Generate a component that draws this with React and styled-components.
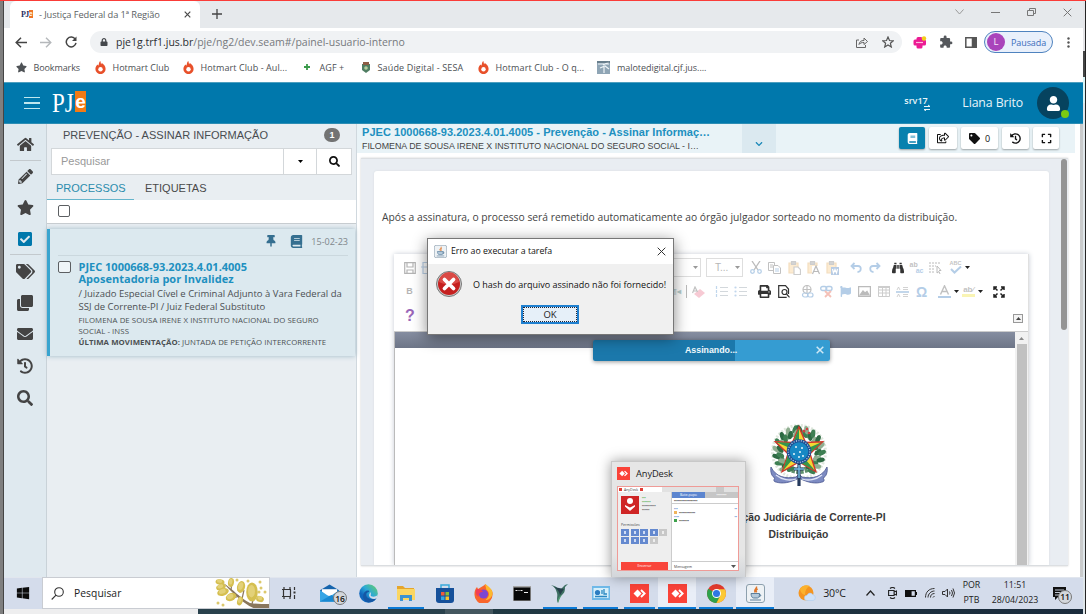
import React from "react";
import styled, { createGlobalStyle, css } from "styled-components";
import {
  FaHome, FaPencilAlt, FaStar, FaCheckSquare, FaTags, FaClone, FaEnvelope, FaHistory, FaSearch,
  FaThumbtack, FaBook, FaTag, FaExpand, FaLock, FaBinoculars, FaPrint,
  FaChevronDown, FaUser, FaFlag, FaWindows, FaRegShareSquare,
} from "react-icons/fa";
import { MdExtension } from "react-icons/md";

const arial = `"Liberation Sans", Arial, sans-serif`;
const open = `"Open Sans", "Noto Sans", sans-serif`;

const Global = createGlobalStyle`
  * { box-sizing: border-box; }
  html, body { margin: 0; overflow: hidden; background: #fff; }
  body { font-family: ${open}; color: #444; line-height: 1; }
  svg { display: block; flex: none; }
`;

const Screen = styled.div`
  position: relative; width: 1086px; height: 614px; overflow: hidden;
  display: grid; grid-template-columns: 4px 1079px 3px; border-top: 1px solid #fa3c38;
`;
const LeftEdge = styled.div`background: #7f7f7f; border-right: 1px solid #454545;`;
const RightEdge = styled.div`
  background: linear-gradient(#e5e5e8 0 50px, #444 50px 76px, #d7f4f6 76px 102px, #dfe6ea 102px);
  border-right: 1px solid #252525;
`;
const Desktop = styled.div`display: flex; flex-direction: column; height: 613px; min-width: 0;`;
const Txt = styled.span`
  white-space: nowrap; flex: none;
  font-size: ${(p) => p.$s}px; letter-spacing: ${(p) => p.$ls || 0}px;
  margin-left: ${(p) => p.$ml || 0}px;
  ${(p) => p.$c && css`color: ${p.$c};`}
`;

/* ---- browser chrome ---- */
const TabStrip = styled.div`height: 27px; background: #e6e9ec; display: flex; padding-left: 6px;`;
const Tab = styled.div`
  width: 190px; background: #fff; border-radius: 6px 6px 0 0; display: flex; align-items: center;
  padding-left: 11px; color: #5b5f64;
`;
const Favicon = styled.div`
  display: flex; align-items: center; width: 12px; height: 9px; font: bold 8px/9px "Liberation Serif", serif;
  letter-spacing: -0.6px; color: #27305f;
  b { color: #fff; background: #ee7526; width: 4px; font: bold 7px/8px ${arial}; }
`;
const CloseSlot = styled.div`margin-left: auto; margin-right: ${(p) => p.$mr || 0}px;`;
const NewTab = styled.div`display: flex; align-items: center; margin-left: 12px;`;
const WindowControls = styled.div`
  display: flex; align-items: center; margin-left: auto; gap: 27px; padding: 0 11px 4px 0;
`;
const AddressRow = styled.div`
  height: 28px; background: #fff; display: flex; align-items: center; padding: 1px 13px 0 11px;
`;
const NavButtons = styled.div`display: flex; gap: 13px; width: 75px; align-items: center;`;
const Omnibox = styled.div`
  width: 812px; height: 22px; border-radius: 11px; background: #f0f2f4; display: flex; align-items: center;
  padding: 0 8px 0 10px; color: #76797d;
  b { font-weight: 400; color: #2b2e31; }
`;
const OmniActions = styled.div`display: flex; gap: 14px; margin-left: auto; align-items: center;`;
const Extensions = styled.div`display: flex; gap: 12px; align-items: center; margin-left: 11px;`;
const Profile = styled.div`
  width: 69px; height: 22px; margin-left: 7px; border: 1px solid #4f83bf; border-radius: 11px; background: #e9f0fb;
  display: flex; align-items: center; color: #3a6dbb; padding-left: 2px;
`;
const Initial = styled.div`
  width: 18px; height: 18px; border-radius: 50%; background: #a944bb; color: #f6e7f9; font-size: 9.5px;
  display: grid; place-items: center;
`;
const Bookmarks = styled.div`
  height: 27px; background: #fff; display: flex; align-items: center; padding: 0 0 3px 11.500px; color: #4c4f53;
`;
const Bookmark = styled.div`
  display: flex; align-items: center; gap: ${(p) => p.$g || 7}px; width: ${(p) => p.$w}px; flex: none;
`;

/* ---- application header ---- */
const Header = styled.header`
  height: 42px; background: #0078ac; border-top: 1px solid #4d9fbf; border-bottom: 1px solid #2c8db4;
  display: flex; align-items: center; padding: 0 14px 0 20px; color: #e8f5fa;
`;
const Burger = styled.div`
  width: 16px; height: 12px; border: solid #bfe8ef; border-width: 1.5px 0; display: flex; align-items: center;
  &::after { content: ""; width: 100%; height: 1.5px; background: #bfe8ef; }
`;
const Logo = styled.div`
  display: flex; align-items: center; margin-left: 12px; height: 30px; color: #fff;
  font: 28px/30px "Liberation Serif", serif;
  span { display: inline-block; transform: scaleX(0.82); transform-origin: left; width: 23px; }
  b { width: 11px; height: 21px; background: #f27a14; font: bold 19px/22px ${arial}; text-align: center; margin-bottom: 4px; }
`;
const Server = styled.div`display: flex; margin-left: auto; width: 58px; font-weight: 600; svg { margin: 6px 0 0 -5px; }`;
const Avatar = styled.div`
  position: relative; width: 32px; height: 32px; border-radius: 50%; background: #06435f; margin-left: 14px;
  display: grid; place-items: center; color: #fff;
  &::after {
    content: ""; position: absolute; right: 0; bottom: 1px; width: 8px; height: 8px; border-radius: 50%;
    background: #7ccb12;
  }
`;

/* ---- body ---- */
const Body = styled.div`height: 453px; display: flex; background: #fff; flex: none; border-right: 3px solid #c9cbcc;`;
const Rail = styled.nav`
  width: 43px; background: #dfe9ef; border-right: 1px solid #c9d2d8; display: flex; flex-direction: column;
  align-items: center; padding-top: 5px; color: #444; flex: none;
`;
const RailItem = styled.div`
  height: 31.6px; width: 31px; display: grid; place-items: center; flex: none;
  ${(p) => p.$line && css`border-bottom: 1.5px solid #c3c9cd;`}
  ${(p) => p.$on && css`color: #0078ac;`}
`;
const ListPane = styled.section`
  width: 310px; background: #e9eef2; border-right: 1px solid #d0d8de; flex: none; display: flex;
  flex-direction: column; font-family: ${arial};
`;
const ListHead = styled.div`
  height: 24px; display: flex; align-items: center; justify-content: space-between; padding: 0 16px 1px 16px;
  color: #484c50;
`;
const Count = styled.div`
  width: 16px; height: 14px; border-radius: 7px; background: #737373; color: #fff; font: bold 9px/14px ${arial};
  text-align: center;
`;
const SearchBox = styled.div`
  height: 27px; width: 301px; margin-left: 4px; display: flex; background: #fff; border: 1px solid #d3d7da;
  color: #999;
`;
const SearchInput = styled.div`width: 231px; padding-left: 9px; display: flex; align-items: center;`;
const SearchButton = styled.div`
  width: ${(p) => p.$w}px; border-left: 1px solid #d3d7da; display: grid; place-items: center; color: #111;
`;
const Tabs = styled.div`height: 25px; display: flex;`;
const ListTab = styled.div`
  width: ${(p) => p.$w}px; padding: 3px 0 0 ${(p) => p.$pl}px; color: ${(p) => (p.$on ? "#2b8cad" : "#4a4a4a")};
  border-bottom: 1.5px solid ${(p) => (p.$on ? "#65b5cc" : "transparent")}; display: flex; align-items: center;
`;
const SelectAll = styled.div`
  height: 24px; background: #fff; padding: 5px 0 0 10.500px; border-bottom: 1px solid #c8cdd0;
`;
const Check = styled.div`width: 12.5px; height: 12.5px; border: 1.5px solid #5c5f62; border-radius: 2px; flex: none; background: #fff8;`;
const Card = styled.article`
  margin-top: 5px; width: 308px; height: 127px; background: #dce9ef; border-left: 3px solid #39a4cf;
  box-shadow: 0 0 5px #9fb9c6; font-family: ${open}; color: #4b4f52; padding: 0 7px 0 8px;
`;
const CardMeta = styled.div`
  height: 27px; border-bottom: 1px solid #cbd8de; display: flex; align-items: center; justify-content: flex-end;
  gap: 13px; color: #356f90; padding-bottom: 1px;
`;
const CardBody = styled.div`display: flex; gap: 8px; padding-top: 5px;`;
const CardText = styled.div`display: flex; flex-direction: column;`;
const Line = styled.div`
  height: ${(p) => p.$h}px; line-height: ${(p) => p.$h}px; font-size: ${(p) => p.$s}px; white-space: nowrap;
  letter-spacing: ${(p) => p.$ls || 0}px;
`;
const Link = styled(Line)`font-weight: 700; color: #2090c0;`;

const Detail = styled.section`width: 723px; display: flex; flex-direction: column;`;
const DetailHead = styled.div`
  width: 718px; height: 29px; background: #e9f3f7; display: flex; padding: 0 16px 0 5px; font-family: ${arial};
`;
const DetailTitle = styled.div`width: 380px; padding-top: 2.5px;`;
const Expand = styled.div`width: 34px; background: #dbe9f0; color: #1b88b8; display: grid; place-items: center; padding-top: 12px;`;
const Actions = styled.div`display: flex; margin-left: auto; gap: 4px; padding-top: 3.5px;`;
const Action = styled.div`
  width: ${(p) => p.$w}px; height: 22px; border-radius: 2px; background: ${(p) => (p.$on ? "#0881ae" : "#fff")};
  color: ${(p) => (p.$on ? "#fff" : "#111")}; box-shadow: 0 1px 2px #0005; display: flex; align-items: center;
  justify-content: center; gap: 5px; font-family: ${open};
`;
const Stage = styled.div`
  margin: 5px 0 0 4px; width: 707px; height: 408px; background: #e9edf2; border: solid #dcdfe2; border-width: 1px 0;
  display: flex; padding: 12px 1px 0 13px; box-shadow: 0 0 2px #ccc;
`;
const Paper = styled.div`width: 675px; height: 394px; background: #fff; border-radius: 3px 3px 0 0; box-shadow: 0 0 2px #d5d9de;`;
const Notice = styled.div`height: 83px; padding: 9px 0 0 8px; color: #444; display: flex; align-items: center;`;
const ScrollThumb = styled.div`width: 6px; height: 171px; margin: -12px 0 0 auto; border-radius: 3px; background: #949494;`;
const Editor = styled.div`
  margin-left: 20px; width: 635px; height: 311px; border-right: 1px solid #e0e0e0; box-shadow: 0 0 5px #c6ccd6;
  clip-path: inset(-6px -6px 0 -6px);
`;
const ToolRows = styled.div`height: 78px; padding: 2px 0 0 6px; border-bottom: 1px solid #ccc;`;
const ToolRow = styled.div`height: 24px; display: flex; align-items: center;`;
const Tool = styled.div`
  width: 19px; height: 20px; display: grid; place-items: center; flex: none; margin-left: ${(p) => p.$ml || 0}px;
  opacity: ${(p) => (p.$off ? 0.36 : 1)};
`;
const Select = styled.div`
  width: ${(p) => p.$w}px; height: 19px; margin-left: ${(p) => p.$ml}px; border: 1px solid #dedede; display: flex;
  align-items: center; justify-content: space-between; padding: 0 2px 0 8px; color: #b6b6b6; font: 10px ${arial};
`;
const Rule = styled.div`width: 1px; height: 13px; background: #bbb;`;
const Mark = styled.span`
  font: ${(p) => p.$w || 700} ${(p) => p.$s}px/1 ${arial}; color: ${(p) => p.$c};
`;
const Stack = styled.div`
  display: flex; flex-direction: column; align-items: ${(p) => p.$a || "center"}; width: 14px; font: 700 ${(p) => p.$s}px/${(p) => p.$lh}px ${arial}; color: #555;
  em { font-style: normal; color: #3378bd; align-self: flex-end; }
`;
const LastRow = styled.div`display: flex; align-items: center; justify-content: space-between; padding: 0 5px 0 5px; height: 24px;`;
const Collapse = styled.div`width: 10px; height: 9px; margin-top: 6px; border: 1px solid #999; background: #f3f3f3; display: grid; place-items: center;`;
const Viewer = styled.div`height: 234px; display: flex;`;
const DocArea = styled.div`width: 621px; border-left: 1px solid #bbb; overflow: hidden; flex: none;`;
const DocBar = styled.div`height: 16px; background: linear-gradient(#858da0, #6d7587); margin-left: -1px;`;
const Page = styled.div`
  width: 807px; padding-top: 76.500px; display: flex; flex-direction: column; align-items: center; color: #3a3a3a;
  font: bold 10.35px/17px ${arial};
`;
const Spacer = styled.div`height: ${(p) => p.$h}px;`;
const DocScroll = styled.div`
  width: 13px; background: #f1f1f1; display: flex; flex-direction: column; align-items: center; padding-top: 5px;
`;
const DocThumb = styled.div`width: 10px; flex: 1; margin-top: 4px; background: #c1c1c1;`;

/* ---- overlays ---- */
const Dialog = styled.div`
  position: absolute; left: 427px; top: 237px; width: 247px; height: 97px; border: 1px solid #777;
  background: #f0f0f0; box-shadow: 0 3px 14px #0007; color: #111; z-index: 3;
`;
const DialogTitle = styled.div`height: 25px; background: #fff; display: flex; align-items: center; padding: 0 7px 1px 6px;`;
const DialogBody = styled.div`display: flex; align-items: center; height: 40px; padding-left: 8px;`;
const OkButton = styled.div`
  width: 58px; height: 19px; margin-left: 93px; margin-top: 1px; border: 2px solid #1f80d0; background: #e6f0f9; padding: 0;
  font-size: 9.5px; color: #222;
  span { display: grid; place-items: center; height: 100%; outline: 1px dotted #223; outline-offset: -1px; }
`;
const Toast = styled.div`
  position: absolute; left: 593px; top: 339px; width: 237px; height: 21px; border-radius: 2px; z-index: 2;
  background: linear-gradient(90deg, #1b78ab 142px, #359cd2 142px); box-shadow: 0 1px 4px #0006; color: #f0f8fc;
  display: flex; align-items: center; justify-content: space-between; padding: 0 6px 1px 92px;
  font-family: ${arial}; font-weight: 700;
`;
const Preview = styled.div`
  position: absolute; left: 611px; top: 460px; width: 135px; height: 116px; background: linear-gradient(#e6e6e6 80%, #d3d6da);
  border: 1px solid #c8c8c8; border-bottom: 0; box-shadow: 0 0 12px #0006; padding: 5px; z-index: 2;
`;
const PreviewTitle = styled.div`display: flex; align-items: center; gap: 6px; height: 13px; color: #222;`;
const Mini = styled.div`
  margin-top: 6px; width: 122px; height: 85px; border: 1px solid #ef9b97; background: #fff; display: grid;
  grid-template: 5px 1fr / 54px 1fr; font-size: 3.500px; color: #444;
`;
const MiniTop = styled.div`
  grid-column: 1 / 3; background: linear-gradient(90deg, #fff 44px, #e2e2e2 44px 98px, #c9c9c9 98px 106px, #e2e2e2 106px);
  display: flex; align-items: center; padding-left: 1px; gap: 2px;
  i { width: 3px; height: 3px; background: #e04038; }
`;
const MiniLeft = styled.div`background: #eee; border-right: 1px solid #ccc; padding: 4px 3px 0;`;
const MiniUser = styled.div`display: flex; gap: 3px; height: 27px;`;
const MiniInfo = styled.div`line-height: 4px; white-space: nowrap; b { color: #45a845; }`;
const MiniGrid = styled.div`
  display: grid; grid-template-columns: repeat(5, 8px); gap: 1.5px; margin-top: 2px;
  i { height: 6.5px; background: #cfdcf5; border: solid #6489cf; border-width: 2px 3px; }
  i:nth-child(5), i:nth-child(9) { border-color: #c8c8c8; background-color: #eee; }
`;
const MiniButton = styled.div`margin-top: 18px; height: 8px; background: #f9453b; color: #fff; display: grid; place-items: center;`;
const MiniRight = styled.div`display: flex; flex-direction: column;`;
const MiniTabs = styled.div`
  height: 6px; background: linear-gradient(90deg, #5c85cf 50%, #c6c6c6 50%); display: grid;
  grid-template-columns: 1fr 1fr; place-items: center; color: #fff;
`;
const MiniTopic = styled.div`height: 6px; border-bottom: 1px solid #ccc; line-height: 5px; padding-left: 2px; font-weight: 700; color: #222;`;
const MiniChat = styled.div`flex: 1; padding: 3px 1px 0 2px; line-height: 4px; white-space: nowrap;`;
const MiniRow = styled.div`display: flex; justify-content: space-between; color: #4b77c6;`;
const MiniMsg = styled.div`
  display: flex; gap: 2px; color: #222;
  &::before { content: ""; width: 3px; height: 3px; background: ${(p) => p.$c}; }
`;
const MiniInput = styled.div`height: 9px; border-top: 1px solid #ccc; display: flex; justify-content: space-between; padding: 3px 2px;`;

/* ---- taskbar ---- */
const Taskbar = styled.footer`
  height: 32px; background: #d4dceb; display: flex; align-items: center; flex: none; border-top: 1px solid #e1e6ee; color: #222;
`;
const Start = styled.div`width: 38px; display: grid; place-items: center; color: #0b0b0b;`;
const TaskSearch = styled.div`
  width: 228px; height: 32px; background: #fff; border: 1px solid #c9ccd2; display: flex; align-items: center;
  padding-left: 8px; gap: 10px; overflow: hidden; flex: none;
`;
const SearchArt = styled.div`margin-left: auto;`;
const TaskItem = styled.div`
  position: relative; width: ${(p) => p.$w}px; height: 32px; display: grid; place-items: center; flex: none;
  background: ${(p) => (p.$on ? "#e9eef7" : "none")};
  ${(p) => p.$run && css`&::after {
    content: ""; position: absolute; bottom: 0; height: 2px; background: #0b7ad6;
    left: ${p.$on ? 0 : 3}px; right: ${p.$on ? 0 : 3}px;
  }`}
`;
const Badge = styled.span`
  position: absolute; right: ${(p) => p.$r}px; top: ${(p) => p.$t}px; width: 14px; height: 14px; border-radius: 50%;
  background: #d3d7dc; border: 1px solid #777; display: grid; place-items: center; font: 600 8.5px ${open}; color: #111;
`;
const Tray = styled.div`display: flex; align-items: center; margin: 0 12px 0 auto; height: 32px;`;
const TraySlot = styled.div`width: ${(p) => p.$w}px; display: grid; place-items: center; position: relative;`;
const TwoLine = styled.div`width: ${(p) => p.$w}px; text-align: center; font-size: 8.8px; line-height: 15px; letter-spacing: ${(p) => p.$ls || 0}px; white-space: nowrap;`;
const BottomEdge = styled.div`
  height: 5px; flex: none;
  background: linear-gradient(90deg, #eeeeef 194px, #29414c 194px 441px, #44575f 441px 489px, #213943 489px, #1a2b3c);
`;

const S = ({ w = 14, h = w, c = "#555", sw = 1.2, fill = "none", children }) => (
  <svg width={w} height={h} viewBox={`0 0 ${w} ${h}`} fill={fill} stroke={c} strokeWidth={sw}>{children}</svg>
);
const Cross = ({ s = 8, c = "#555", sw = 1.2 }) => <S w={s} c={c} sw={sw}><path d={`M.7.7 ${s - 0.7} ${s - 0.7}M${s - 0.7}.7.7 ${s - 0.7}`} /></S>;
const Caret = ({ c = "#222", up }) => <S w={5} h={3} c="none" fill={c}><path d={up ? "M0 3h5L2.5 0z" : "M0 0h5L2.5 3z"} /></S>;

const Flame = () => (
  <S w={11} h={13} c="none"><path fill="#e8502a" d="M5.2 0c.8 1.2.3 2.2 1 3.2.4-.4.5-.9.4-1.4C8.6 3.2 10.6 5.3 10.6 8a5.1 5.1 0 0 1-10.2 0C.4 5.7 1.6 4.6 2.6 3.5c.2.6.5.9.9 1C4 3 3.8 1.2 5.2 0z" /><circle cx="5.5" cy="8.3" r="2.2" fill="#fff" /></S>
);
const AnyIcon = ({ s = 19 }) => (
  <svg width={s} height={s} viewBox="0 0 19 19"><path fill="#fa4238" d="M0 0h19v19H0z" /><path fill="#fff" d="M7.5 5.500l4 4-4 4-4-4z" /><path d="M11 6l3.600 3.500L11 13" fill="none" stroke="#fff" strokeWidth="1.900" /></svg>
);
const JavaIcon = ({ s = 19 }) => (
  <svg width={s} height={s} viewBox="0 0 19 19"><rect x=".5" y=".5" width="18" height="18" rx="2.500" fill="#eef2f5" stroke="#8da0ae" /><path d="M10.500 2.500c1 2-3.500 3-1.200 6M11.700 5c-2 .7-2 2-.9 3.300" stroke="#e0762b" fill="none" strokeWidth="1.400" /><path d="M5 9.500h8.500c0 3.500-1 4.500-2 4.500h-4c-1.300 0-2.300-1.500-2.500-4.500zM13 10.500c2.500-.5 2.200 2 0 2.300M4 16h11" stroke="#4f7594" fill="#b4c9da" strokeWidth=".9" /></svg>
);
const Emblem = () => {
  const leaves = [];
  for (let i = 0; i < 34; i++) {
    const a = -150 + i * 9.1;
    leaves.push(
      <ellipse key={i} cx="30" cy={i % 2 ? 4.5 : 9.5} rx="2.300" ry="4.200"
        transform={`rotate(${a} 30 28) rotate(${i < 17 ? 35 : -35} 30 7)`} fill={["#3d7f52", "#8fae90", "#2d6a43"][i % 3]} />
    );
  }
  return (
    <svg width="60" height="63" viewBox="0 0 60 63">
      <circle cx="30" cy="28" r="26.500" fill="none" stroke="#dfe7dd" strokeWidth="3" strokeDasharray="2 1.500" />
      <circle cx="30" cy="28" r="19" fill="none" stroke="#5f8f6c" strokeWidth="6" strokeDasharray="3 1.200" />
      {leaves}
      <circle cx="35" cy="7" r="1.500" fill="#d04040" /><circle cx="40" cy="9" r="1.300" fill="#d04040" /><circle cx="38" cy="5" r="1.200" fill="#d04040" />
      <path d="M30 3l6.600 15.500 17-.8-12.600 12 5.800 17.800L30 38l-16.800 9.500L19 29.700l-12.600-12 17 .8z" fill="#f5d633" stroke="#d4352c" strokeWidth="1.400" />
      <path d="M30 4v24L23.800 18.900zM53 18L30 28l10.600 1.500zM46 46.500L30 28v10zM14 46.500L30 28l-10.800 1.500zM7 18l23 10-6-9z" fill="#36964b" />
      <path d="M2 43c5 10 14 12 25 10l3-3 3 3c11 2 20 0 25-10 1 5-1 10-4 11 2 2 1 4-1 4-6 2-14 1-23-4-9 5-17 6-23 4-2 0-3-2-1-4-3-1-5-6-4-11z" fill="#7d8bc2" stroke="#49568e" strokeWidth=".8" />
      <path d="M7 51c6 5 14 6 20 4M53 51c-6 5-14 6-20 4" stroke="#dfe4f5" strokeWidth="1.300" fill="none" />
      <path d="M30 37v25M25 45h10" stroke="#263a5d" strokeWidth="3.200" /><path d="M30 41v13M25 45h10" stroke="#72bce0" strokeWidth="1.500" />
      <circle cx="30" cy="27.500" r="12.300" fill="#1d4f94" /><circle cx="30" cy="27.500" r="10.800" fill="none" stroke="#d8e9f5" strokeWidth="1.100" strokeDasharray="1 1.500" /><circle cx="30" cy="27.500" r="9.300" fill="#1788c4" />
      {[[27, 23], [33, 24], [31, 28], [25, 30], [34, 32], [30, 33]].map(([x, y]) => <circle key={`${x}-${y}`} cx={x} cy={y} r="1" fill="#e8f6fb" />)}
    </svg>
  );
};
const Blossom = () => (
  <svg width="54" height="31" viewBox="0 0 54 31">
    <path d="M7 4c12 8 18 16 28 21 7 1 13 1 19 1v5H41C29 27 18 15 7 4z" fill="#8a775c" />
    <path d="M27 21l2-9M16 12l1-8M24 18l-8 3M37 26l2-8" stroke="#8a775c" strokeWidth="1.200" />
    {[[5, 4, 4.5, 2.7, 10], [16, 4.5, 3, 4.5, 10], [6, 9, 5, 2.8, -20], [8, 14, 6, 3.6, -20], [26, 9, 4, 6, 15], [16, 19, 5.5, 3.8, -25], [25, 23, 2.7, 4.5, 20], [37, 14, 5.8, 9.5, 0], [45, 21, 4, 3, 20]].map(([x, y, a, b, r], i) => (
      <g key={i} transform={`rotate(${r} ${x} ${y})`}>
        <ellipse cx={x} cy={y} rx={a} ry={b} fill="#d5bf50" />
        <ellipse cx={x - 0.5} cy={y - 0.8} rx={a * 0.6} ry={b * 0.65} fill="#e3d178" />
      </g>
    ))}
    {[[33, 3], [45, 4], [46, 10], [50, 14], [3, 25], [8, 27], [22, 2], [44, 14]].map(([x, y], i) => <circle key={i} cx={x} cy={y} r="1.500" fill="#dcc86c" />)}
  </svg>
);

const ListIcon = ({ num }) => (
  <S w={13} h={13} c="#8794a1"><path d="M5 2.500h8M5 6.500h8M5 10.500h8" />{[2.5, 6.5, 10.5].map((y) => num ? <path key={y} d={`M1.500 ${y - 1.5}v3`} stroke="#5792cf" /> : <circle key={y} cx="1.500" cy={y} r="1.100" fill="#5792cf" stroke="none" />)}</S>
);
const Clip = ({ kind }) => (
  <S w={13} h={14} c="#e0a550"><path d="M1 2h9v10H1z" fill="#f7c983" /><path d="M3.500 0.500h4v3h-4z" fill="#888" stroke="#777" />
    {kind === "A" ? <><path d="M5 5h8v9H5z" fill="#fff" stroke="none" /><path d="M5.500 13L9 5l3.500 8M7 10.500h4" stroke="#444" /></> : kind === "W" ? <><path d="M5 6h8v8H5z" fill="#3c73b5" stroke="none" /><path d="M6.500 8l1 4 1.500-3.500L10.500 12l1-4" stroke="#fff" /></> : <path d="M6 6h4l2.500 2.500v5H6z" fill="#fff" stroke="#777" />}</S>
);

function Browser() {
  return (
    <>
      <TabStrip>
        <Tab>
          <Favicon>PJ<b>e</b></Favicon>
          <Txt $s={9.3} $ml={6} $ls={-0.1}>- Justiça Federal da 1ª Região</Txt>
          <CloseSlot $mr={9}><Cross s={7} c="#4a4a4a" /></CloseSlot>
        </Tab>
        <NewTab><S w={10} c="#444" sw={1.3}><path d="M5 0v10M0 5h10" /></S></NewTab>
        <WindowControls>
          <S w={9} h={6} c="#999" sw={1}><path d="M.5.5l4 4.500 4-4.500" /></S>
          <S w={9} h={6} c="#777" sw={1}><path d="M0 3.500h9" /></S>
          <S w={9} h={8} c="#777" sw={1}><path d="M.5 2.500h6v5h-6zM2.500 2.500v-2h6v5h-2" /></S>
          <Cross s={9} c="#777" sw={1} />
        </WindowControls>
      </TabStrip>
      <AddressRow>
        <NavButtons>
          <S w={12} h={11} c="#444" sw={1.5}><path d="M12 5.500H1M6 .8L1.200 5.500 6 10.200" /></S>
          <S w={12} h={11} c="#b5b8bb" sw={1.4}><path d="M0 5.500h11M6 .8l4.800 4.700L6 10.200" /></S>
          <S w={12} h={12} c="#444" sw={1.5}><path d="M10.300 3.300A4.900 4.900 0 1 0 11 6.900" /><path d="M11.500.5v4.500H7z" fill="#444" stroke="none" /></S>
        </NavButtons>
        <Omnibox>
          <FaLock size={8} color="#45484c" />
          <Txt $s={10.5} $ml={8}><b>pje1g.trf1.jus.br</b>/pje/ng2/dev.seam#/painel-usuario-interno</Txt>
          <OmniActions>
            <S w={12} h={11} c="#666" sw={1}><path d="M3 3H.5v7.500h9V8M3 7.500c.5-3 2-4 5-4V1l3.500 3.500L8 7.500V5.500C5.500 5.500 4 6 3 7.500z" /></S>
            <S w={12} h={12} c="#555" sw={1.2}><path d="M6 1l1.500 3.500 3.800.3-2.900 2.500.9 3.700L6 9l-3.300 2 .9-3.700L.7 4.800l3.800-.3z" /></S>
          </OmniActions>
        </Omnibox>
        <Extensions>
          <S w={14} h={13} c="none"><path d="M5 2.500h3v2.500h3.500v3H8v3H5V8H2V5h3z" fill="#ec1b94" stroke="#ec1b94" strokeWidth="3" strokeLinejoin="round" /><circle cx="11" cy="2.500" r="2.200" fill="#f4cd19" /><path d="M3 6.500h7" stroke="#fbd" /></S>
          <MdExtension size={14} color="#55585c" />
          <S w={12} h={11} c="#555" sw={1.5}><path d="M.8.8h10.400v9.400H.8z" /><path d="M7.500 1H11v9H7.500z" fill="#555" /></S>
        </Extensions>
        <Profile><Initial>L</Initial><Txt $s={9} $ml={6} $ls={-0.1}>Pausada</Txt></Profile>
        <CloseSlot><S w={3} h={11} c="none" fill="#555"><circle cx="1.500" cy="1.500" r="1.200" /><circle cx="1.500" cy="5.500" r="1.200" /><circle cx="1.500" cy="9.500" r="1.200" /></S></CloseSlot>
      </AddressRow>
      <Bookmarks>
        <Bookmark $w={79}><FaStar size={11} color="#4e5256" /><Txt $s={9} $ls={-0.1}>Bookmarks</Txt></Bookmark>
        <Bookmark $w={88}><Flame /><Txt $s={9}>Hotmart Club</Txt></Bookmark>
        <Bookmark $w={121}><Flame /><Txt $s={9} $ls={0.08}>Hotmart Club - Aul...</Txt></Bookmark>
        <Bookmark $w={57} $g={10}><S w={6} c="#3a9a4a" sw={1.8}><path d="M3 0v6M0 3h6" /></S><Txt $s={9} $ls={0.1}>AGF +</Txt></Bookmark>
        <Bookmark $w={117}><S w={10} h={11} c="none"><path d="M1 2h8v6l-4 3-4-3z" fill="#4f7d62" /><path d="M2 0h6v3H2z" fill="#8c5c44" /><circle cx="5" cy="6" r="1.800" fill="#b5cf9e" /></S><Txt $s={9} $ls={0.15}>Saúde Digital - SESA</Txt></Bookmark>
        <Bookmark $w={119.5}><Flame /><Txt $s={9} $ls={0.12}>Hotmart Club - O q...</Txt></Bookmark>
        <Bookmark $w={120}><S w={13} h={13} c="none"><path fill="#8fa5b5" d="M0 0h13v13H0z" /><path d="M1 3h11M6 4l6-3M7 5v7M3 7l5-2 4 3" stroke="#eef4f7" /><path d="M0 1h13" stroke="#4e6371" /></S><Txt $s={9} $ls={-0.05}>malotedigital.cjf.jus....</Txt></Bookmark>
      </Bookmarks>
    </>
  );
}

function ProcessList() {
  return (
    <ListPane>
      <ListHead><Txt $s={11} $ls={0.03}>PREVENÇÃO - ASSINAR INFORMAÇÃO</Txt><Count>1</Count></ListHead>
      <SearchBox>
        <SearchInput><Txt $s={11}>Pesquisar</Txt></SearchInput>
        <SearchButton $w={33}><Caret c="#000" /></SearchButton>
        <SearchButton $w={35}><FaSearch size={11} /></SearchButton>
      </SearchBox>
      <Tabs>
        <ListTab $w={87} $pl={9} $on><Txt $s={11}>PROCESSOS</Txt></ListTab>
        <ListTab $w={80} $pl={11}><Txt $s={11}>ETIQUETAS</Txt></ListTab>
      </Tabs>
      <SelectAll><Check /></SelectAll>
      <Card>
        <CardMeta><FaThumbtack size={12} /><FaBook size={13} /><Txt $s={9.1} $c="#80878b" $ml={-5} $ls={-0.05}>15-02-23</Txt></CardMeta>
        <CardBody>
          <Check />
          <CardText>
            <Link $h={12.5} $s={11}>PJEC 1000668-93.2023.4.01.4005</Link>
            <Link $h={12.5} $s={11} $ls={0.02}>Aposentadoria por Invalidez</Link>
            <Line $h={15.5} $s={9.5}>/ Juizado Especial Cível e Criminal Adjunto à Vara Federal da</Line>
            <Line $h={12.5} $s={9.5}>SSJ de Corrente-PI / Juiz Federal Substituto</Line>
            <Line $h={12.5} $s={7.8} $ls={0.07}>FILOMENA DE SOUSA IRENE X INSTITUTO NACIONAL DO SEGURO</Line>
            <Line $h={11} $s={7.8} $ls={0.07}>SOCIAL - INSS</Line>
            <Line $h={11} $s={7.8} $ls={0.07}><b>ÚLTIMA MOVIMENTAÇÃO:</b> JUNTADA DE PETIÇÃO INTERCORRENTE</Line>
          </CardText>
        </CardBody>
      </Card>
    </ListPane>
  );
}

function EditorTools() {
  return (
    <ToolRows>
      <ToolRow>
        <Tool $off><S w={12} c="#333"><path d="M.7.7h10.600v10.600H.7zM3 1v4h6V1M3 11V8h6v3" /></S></Tool>
        <Tool $off $ml={-2}><S w={12} c="#447fbb"><path d="M2 .5h7l2 2v9H2zM0 5h7" /></S></Tool>
        <Select $w={60} $ml={205}><span /><Caret c="#999" /></Select>
        <Select $w={37} $ml={5}>T...<Caret c="#999" /></Select>
        <Tool $off $ml={3}><S w={12} h={13} c="#444" sw={1.3}><path d="M2 0l6 9M10 0L4 9" /><circle cx="2.500" cy="10.500" r="1.800" stroke="#3c7fc0" /><circle cx="9.500" cy="10.500" r="1.800" stroke="#3c7fc0" /></S></Tool>
        <Tool $off><S w={13} h={12} c="#555" sw={1}><path d="M.5.5h6v8h-6zM2 3h3M2 5h3" /><path d="M5.500 3.500H10l2.500 2.500v5.500h-7z" fill="#fff" /><path d="M7 7h4M7 9h4" stroke="#3c7fc0" /></S></Tool>
        <Tool $off $ml={1}><Clip /></Tool><Tool $off><Clip kind="A" /></Tool><Tool $off><Clip kind="W" /></Tool>
        <Tool $off $ml={4}><S w={12} h={11} c="#3378bd" sw={1.8}><path d="M4.500 1L1.500 4l3 3M2 4h6c4 0 3.500 6-.5 6" /></S></Tool>
        <Tool $off><S w={12} h={11} c="#3378bd" sw={1.8}><path d="M7.500 1l3 3-3 3M10 4H4C0 4 .5 10 4.500 10" /></S></Tool>
        <Tool $ml={4}><FaBinoculars size={12} color="#333" /></Tool>
        <Tool $off><Stack $s={7} $lh={6} $a="flex-start">ab<em>ac</em></Stack></Tool>
        <Tool $off><S w={13} h={12} c="#444" sw={1}><path d="M0 1h11M0 4h7M0 7h6M0 10h6" strokeDasharray="2 1" /><path d="M8 4v7l2-1.500 1 2.500M8 4l4 4.500h-2" /></S></Tool>
        <Tool $off $ml={1}><Stack $s={5.5} $lh={5}>ABC<S w={12} h={8} c="#3378bd" sw={2}><path d="M1 3l3.500 3.500L11 .5" /></S></Stack></Tool>
        <Caret />
      </ToolRow>
      <ToolRow>
        <Tool $off><Mark $s={9} $c="#333">B</Mark></Tool>
        <Tool $off><Mark $s={9} $c="#333"><i>I</i></Mark></Tool>
        <Tool $off $ml={229}><Mark $s={8} $c="#377">¶◂</Mark></Tool>
        <Rule />
        <Tool $off $ml={2}><S w={13} h={12} c="none"><path d="M2 8l6-5 5 4-6 5z" fill="#ea6f8a" /><path d="M.5 7L3 1l2.500 5M1.500 5h3" stroke="#555" /></S></Tool>
        <Tool $off $ml={4}><ListIcon num /></Tool><Tool $off><ListIcon /></Tool>
        <Tool $ml={5}><FaPrint size={13} color="#333" /></Tool>
        <Tool><S w={12} h={13} c="#333"><path d="M10.500 9V4L7.500.7H.7v11.600h8" /><circle cx="6.500" cy="7" r="2.500" /><path d="M8.500 9l3 3.300" /></S></Tool>
        <Tool $off $ml={5}><S w={13} c="#555" sw={1.2}><circle cx="6" cy="4.500" r="4" /><path d="M2 4.500h8M6 .5v8" /><rect x="1.500" y="8" width="5.500" height="4" rx="2" stroke="#3378bd" /><rect x="6.500" y="8" width="5.500" height="4" rx="2" stroke="#3378bd" /></S></Tool>
        <Tool $off><S w={13} c="#3378bd" sw={1.4}><rect x=".7" y="1.500" width="6" height="4" rx="2" /><rect x="6" y="1.500" width="6" height="4" rx="2" /><path d="M5 6l6 6M11 6l-6 6" stroke="#e2533b" strokeWidth="1.800" /></S></Tool>
        <Tool $off><FaFlag size={11} color="#3378bd" /></Tool>
        <Tool $off><S w={13} h={11} c="#444"><path d="M.6.6h11.800v9.800H.6z" /><path d="M2 9l3-4 2 2 2-1.500L11 9z" fill="#444" /></S></Tool>
        <Tool $off><S w={12} h={11} c="#777" sw={1}><path d="M.5.5h11v10H.5zM.5 4h11M.5 7h11M4.500 2v8M8 2v8" /><path d="M0 1h12" strokeWidth="2" /></S></Tool>
        <Tool $off><S w={13} h={12} c="#3378bd"><path d="M0 6h13" strokeWidth="1.600" /><path d="M1 4l1.500-3L4 4M7 1.500h5M7 3.500h5M1 11l1.500-3L4 11M7 8.500h5M7 10.500h5" stroke="#666" strokeWidth=".8" /></S></Tool>
        <Tool $off><Mark $s={14} $c="#3378bd">Ω</Mark></Tool>
        <Tool $off $ml={4}><S w={13} h={13} c="#555" sw={1.4}><path d="M2.500 9.500L6.500.8l4 8.700M4 6.500h5" /><path d="M0 12h13" stroke="#3378bd" strokeWidth="2" /></S></Tool>
        <Caret />
        <Tool $off><Stack $s={8} $lh={8}>ab⁄<S w={13} h={3} c="#f0e332" sw={3}><path d="M0 1.500h13" /></S></Stack></Tool>
        <Caret />
        <Tool $ml={6}><S w={12} c="#222" sw={1.5}><path d="M1 4V1h3M8 1h3v3M11 8v3H8M4 11H1V8M1 1l3.500 3.500M11 1L7.500 4.500M11 11L7.500 7.500M1 11l3.500-3.500" /></S></Tool>
      </ToolRow>
      <LastRow><Mark $s={16} $c="#9a66b8">?</Mark><Collapse><Caret up c="#444" /></Collapse></LastRow>
    </ToolRows>
  );
}

function DetailPane() {
  return (
    <Detail>
      <DetailHead>
        <DetailTitle>
          <Link $h={13} $s={11} $ls={0.04}>PJEC 1000668-93.2023.4.01.4005 - Prevenção - Assinar Informaç…</Link>
          <Line $h={14.5} $s={8.85}>FILOMENA DE SOUSA IRENE X INSTITUTO NACIONAL DO SEGURO SOCIAL - I…</Line>
        </DetailTitle>
        <Expand><FaChevronDown size={8} /></Expand>
        <Actions>
          <Action $w={26} $on><FaBook size={11} /></Action>
          <Action $w={28}><FaRegShareSquare size={12} /></Action>
          <Action $w={37}><FaTag size={11} /><Txt $s={9}>0</Txt></Action>
          <Action $w={27}><FaHistory size={11} /></Action>
          <Action $w={26}><FaExpand size={11} /></Action>
        </Actions>
      </DetailHead>
      <Stage>
        <Paper>
          <Notice><Txt $s={10.3}>Após a assinatura, o processo será remetido automaticamente ao órgão julgador sorteado no momento da distribuição.</Txt></Notice>
          <Editor>
            <EditorTools />
            <Viewer>
              <DocArea>
                <DocBar />
                <Page>
                  <Emblem />
                  <Spacer $h={21.5} />
                  <div>Subseção Judiciária de Corrente-PI</div>
                  <div>Distribuição</div>
                </Page>
              </DocArea>
              <DocScroll><Caret up c="#888" /><DocThumb /></DocScroll>
            </Viewer>
          </Editor>
        </Paper>
        <ScrollThumb />
      </Stage>
    </Detail>
  );
}

function TaskBar() {
  return (
    <Taskbar>
      <Start><FaWindows size={14} /></Start>
      <TaskSearch>
        <S w={13} c="#333" sw={1.1}><circle cx="8" cy="5" r="4.300" /><path d="M5 8.200L.7 12.500" /></S>
        <Txt $s={10.3} $ls={0.05}>Pesquisar</Txt>
        <SearchArt><Blossom /></SearchArt>
      </TaskSearch>
      <TaskItem $w={38}><S w={14} h={12} c="#333"><path d="M0 2.500h9M0 9.500h9M2 0v2M8 0v2M2 10v2M8 10v2M1.500 3v6M8.500 3v6M12.500 0v3M12.500 8v4" /><path d="M11.500 4.500h2v2h-2z" fill="#333" stroke="none" /></S></TaskItem>
      <TaskItem $w={43}>
        <svg width="20" height="19" viewBox="0 0 21 19"><path d="M0 6l10-6 10 6v12H0z" fill="#1765ad" /><path d="M2 5h16v7H2z" fill="#fff" /><path d="M0 6l10 7 10-7v12H0z" fill="#37a5e5" /><path d="M0 18L12 11l8 7z" fill="#1889d3" /></svg>
        <Badge $r={4} $t={14}>16</Badge>
      </TaskItem>
      <TaskItem $w={34}>
        <svg width="19" height="19" viewBox="0 0 19 19"><defs><linearGradient id="edge" x1="0" y1="1" x2="1" y2="0"><stop offset=".3" stopColor="#1168bd" /><stop offset=".55" stopColor="#2ba9d8" /><stop offset="1" stopColor="#6bd260" /></linearGradient></defs><circle cx="9.500" cy="9.500" r="9.300" fill="url(#edge)" /><path d="M10 8c-3 0-4 4-1 6 3 2 7 1 9-1-2 5-7 6-10 5-5-2-5-9-1-11 2-1 4 0 3 1z" fill="#1558a5" /><path d="M11 8c2 2 0 3 1 4s5 1 6.500-1c0 2-.5 3-1 3.500-3 1-7 0-7.500-3 0-1.500 1-2 1-3.500z" fill="#d4dceb" /></svg>
      </TaskItem>
      <TaskItem $w={42} $run><svg width="18" height="17" viewBox="0 0 18 17"><path d="M0 1h6l2 2h9v11H0z" fill="#e5a52c" /><path d="M0 4h18v11H0z" fill="#fbd661" /><path d="M3 16v-6h12v6h-3v-3H6v3z" fill="#3c93d2" /></svg></TaskItem>
      <TaskItem $w={36}><svg width="18" height="19" viewBox="0 0 18 19"><path d="M5 4V1h8v3" fill="none" stroke="#38a9dc" strokeWidth="1.500" /><path d="M0 4h18v12q0 3-3 3H3q-3 0-3-3z" fill="#16509a" /><path d="M5 8h3.500v3.500H5z" fill="#ee5a3a" /><path d="M9.500 8H13v3.500H9.500z" fill="#84bd3b" /><path d="M5 12.500h3.500V16H5z" fill="#2fa7e5" /><path d="M9.500 12.500H13V16H9.500z" fill="#f6c22d" /></svg></TaskItem>
      <TaskItem $w={41}><svg width="19" height="19" viewBox="0 0 19 19"><path d="M9 2c2-1 2-2 2-2 2 1 3 3 4 4 3 2 4 4 3.500 7a9 9 0 0 1-18 0C.3 8 1 5 3 3l1 2z" fill="#f9662c" /><path d="M11 0c3 2 8 5 7.500 10-1 4-4 6-7 6 5-4 4-8 1-10z" fill="#fcb92e" /><circle cx="9.500" cy="10" r="4.600" fill="#7d46d2" /><path d="M3 5c3 0 5 1 6 3-3 0-5 2-4 5-4-2-4-6-2-8z" fill="#f13d56" /></svg></TaskItem>
      <TaskItem $w={36}><svg width="18" height="15" viewBox="0 0 18 15"><path fill="#a6a6a6" d="M0 0h18v15H0z" /><path fill="#080808" d="M.7 1.500h16.600v13H.7z" /><path d="M2.500 4.500h2M5.500 4.500h1M7.500 4.500h2M11 6.500h4" stroke="#eee" /></svg></TaskItem>
      <TaskItem $w={40} $run><svg width="18" height="19" viewBox="0 0 18 19"><path d="M0 1c5 1 7 3 8 6l6-6 3-1-3 3c0 5-1 6-3 8-3 2-3 5-4 8-2-4 0-7-1-10C5 6 5 4 0 1z" fill="#3d6f62" /><path d="M3 3c3 2 5 4 6 8l4-6" fill="#26404a" /><path d="M7 19c-1-4 1-7 4-8-2 3-3 5-4 8z" fill="#4f9a70" /></svg></TaskItem>
      <TaskItem $w={41} $run><svg width="18" height="14" viewBox="0 0 18 14"><path fill="#6fb9e8" d="M0 0h18v14H0z" /><path fill="#d7effa" d="M1.500 2h15v10h-15z" /><circle cx="5.500" cy="6.500" r="2.600" fill="#2a7dc2" /><path d="M10 4v4M12 3v5h3M3 10.500h12" stroke="#2a88c2" fill="none" strokeWidth="1.300" /></svg></TaskItem>
      <TaskItem $w={37} $run><AnyIcon /></TaskItem>
      <TaskItem $w={38} $run $on><AnyIcon /></TaskItem>
      <TaskItem $w={40} $run>
        <svg width="19" height="19" viewBox="0 0 20 20"><circle cx="10" cy="10" r="10" fill="#e33b2e" /><path d="M10 10L1.340 5A10 10 0 0 0 10 20l5-8.600z" fill="#2da24c" /><path d="M10 5.500h8.900A10 10 0 0 1 10 20l4-8z" fill="#fcc934" /><circle cx="10" cy="10" r="4.700" fill="#fff" /><circle cx="10" cy="10" r="3.700" fill="#2f77e4" /></svg>
      </TaskItem>
      <TaskItem $w={38} $run $on><JavaIcon /></TaskItem>
      <Tray>
        <TraySlot $w={18}><svg width="18" height="17" viewBox="0 0 18 17"><circle cx="8" cy="8" r="7.500" fill="#f5951f" /><path d="M2 4a7.500 7.500 0 0 1 10-3q-5 2-5 9a7 7 0 0 1-5-6z" fill="#fbb22d" /><path d="M9 15.500a2.600 2.600 0 0 1 0-5.200 3.300 3.300 0 0 1 6-.5 2.900 2.900 0 0 1 0 5.700z" fill="#cfe2f8" stroke="#a9c8ec" strokeWidth=".5" /></svg></TraySlot>
        <TraySlot $w={37}><Txt $s={10.6} $ls={-0.2}>30°C</Txt></TraySlot>
        <TraySlot $w={35}><S w={9} h={6} c="#222"><path d="M.5 5.500l4-4.500 4 4.500" /></S></TraySlot>
        <TraySlot $w={9}><S w={9} h={12} c="#222" sw={1.1}><path d="M.6 3.500h5.500v5H.6zM6 5l2.500-1v4L6 7M2 1.500C3.500.3 5.500.3 7 1.500M2 10.500c1.500 1.200 3.500 1.200 5 0" /></S></TraySlot>
        <TraySlot $w={28}><S w={12} h={7} c="#111" sw={1.2}><path d="M.6.6h9.800v5.800H.6zM11.500 2v3" /><path d="M1 1h5v5H1z" fill="#111" /></S></TraySlot>
        <TraySlot $w={10}><S w={10} h={10} c="#333" sw={1}><path d="M.5 9.500C.5 4 4 .5 9.500.5M3 9.500C3 6 6 3 9.500 3M5.500 9.500C5.500 7 7 5.500 9.500 5.500M8 9.500l1.500-1.500" /></S></TraySlot>
        <TraySlot $w={26}><S w={13} h={10} c="#333" sw={1}><path d="M.5 3.500H3L5.500 1v8L3 6.500H.5zM7.500 3.500q1 1.500 0 3M9.500 2q2 3 0 6M11 .5q3 4.500 0 9" /></S></TraySlot>
        <TwoLine $w={21}>POR<br />PTB</TwoLine>
        <TwoLine $w={66} $ls={-0.02}>11:51<br />28/04/2023</TwoLine>
        <TraySlot $w={23}><S w={13} h={13} c="none" fill="#111"><path d="M0 0h13v10H5l-3 3v-3H0z" /><path d="M2 3h9M2 5.500h9M2 8h6" stroke="#d4dceb" strokeWidth=".9" /></S><Badge $r={-1} $t={3}>11</Badge></TraySlot>
      </Tray>
    </Taskbar>
  );
}

export default function App() {
  return (
    <Screen>
      <Global />
      <LeftEdge />
      <Desktop>
        <Browser />
        <Header>
          <Burger />
          <Logo><span>PJ</span><b>e</b></Logo>
          <Server><Txt $s={9}>srv17</Txt><S w={8} h={9} c="#e8f5fa" sw={1}><path d="M1 4.500h6M5 3l2 1.500M1 7.500h6M3 9L1 7.500" /></S></Server>
          <Txt $s={12.3} $ls={-0.1}>Liana Brito</Txt>
          <Avatar><FaUser size={15} /></Avatar>
        </Header>
        <Body>
          <Rail>
            <RailItem $line><FaHome size={17} /></RailItem>
            <RailItem><FaPencilAlt size={15} /></RailItem>
            <RailItem><FaStar size={17} /></RailItem>
            <RailItem $line $on><FaCheckSquare size={16} /></RailItem>
            <RailItem><FaTags size={19} /></RailItem>
            <RailItem><FaClone size={16} /></RailItem>
            <RailItem><FaEnvelope size={16} /></RailItem>
            <RailItem><FaHistory size={16} /></RailItem>
            <RailItem><FaSearch size={16} /></RailItem>
          </Rail>
          <ProcessList />
          <DetailPane />
        </Body>
        <TaskBar />
        <BottomEdge />
      </Desktop>
      <RightEdge />
      <Dialog>
        <DialogTitle>
          <JavaIcon s={13} /><Txt $s={8.75} $ml={4}>Erro ao executar a tarefa</Txt>
          <CloseSlot><Cross s={9} c="#333" sw={1} /></CloseSlot>
        </DialogTitle>
        <DialogBody>
          <svg width="26" height="26" viewBox="0 0 26 26"><circle cx="13" cy="13" r="12.500" fill="#c9c9c9" stroke="#777" /><circle cx="13" cy="13" r="11" fill="#c5201f" /><path d="M3 11a10 10 0 0 1 20 0q-10 5-20 0z" fill="#da4a45" /><path d="M8.500 8.500l9 9M17.500 8.500l-9 9" stroke="#fff" strokeWidth="3.800" strokeLinecap="round" /></svg>
          <Txt $s={9} $ml={11}>O hash do arquivo assinado não foi fornecido!</Txt>
        </DialogBody>
        <OkButton><span>OK</span></OkButton>
      </Dialog>
      <Toast><Txt $s={8.8}>Assinando...</Txt><Cross s={8} c="#cfe8f5" sw={1.5} /></Toast>
      <Preview>
        <PreviewTitle><AnyIcon s={13} /><Txt $s={9.3} $ls={-0.1}>AnyDesk</Txt></PreviewTitle>
        <Mini>
          <MiniTop><i />AnyDesk<i /></MiniTop>
          <MiniLeft>
            <MiniUser>
              <svg width="18" height="18" viewBox="0 0 18 18"><path fill="#cf2525" d="M0 0h18v18H0z" /><circle cx="9" cy="5" r="3" fill="#fff" /><path d="M4 9l5 2.500L14 9v1.500L9 15l-5-4.500z" fill="#fff" /></svg>
              <MiniInfo><b>▪▪▪<br />▪▪▪▪▪▪▪</b><br />▪▪▪▪▪▪▪▪▪▪▪<br />▪▪▪▪▪▪</MiniInfo>
            </MiniUser>
            <MiniInfo>Permissões</MiniInfo>
            <MiniGrid>{[...Array(9)].map((_, i) => <i key={i} />)}</MiniGrid>
            <MiniButton>Encerrar</MiniButton>
          </MiniLeft>
          <MiniRight>
            <MiniTabs><span>Bate-papo</span><span>▪▪▪▪▪▪▪▪</span></MiniTabs>
            <MiniTopic>▪▪▪▪▪▪▪▪▪▪▪▪▪▪▪▪▪▪▪</MiniTopic>
            <MiniChat>
              <MiniRow><span>▪▪▪</span><span>▪▪</span></MiniRow>
              <MiniMsg $c="#f0b45c">▪▪▪▪▪▪▪▪▪▪▪▪▪</MiniMsg>
              <MiniRow><span>▪▪▪▪</span><span>▪▪</span></MiniRow>
              <MiniMsg $c="#3da14c">▪▪▪▪▪▪▪▪</MiniMsg>
            </MiniChat>
            <MiniInput><span>Mensagem</span><Caret c="#555" /></MiniInput>
          </MiniRight>
        </Mini>
      </Preview>
    </Screen>
  );
}
